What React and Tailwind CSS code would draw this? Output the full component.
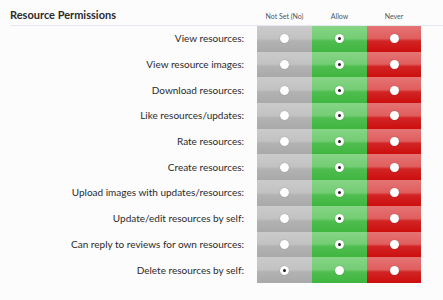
import React from "react";

const ROWS = [
  ["View resources:", 1],
  ["View resource images:", 1],
  ["Download resources:", 1],
  ["Like resources/updates:", 1],
  ["Rate resources:", 1],
  ["Create resources:", 1],
  ["Upload images with updates/resources:", 1],
  ["Update/edit resources by self:", 1],
  ["Can reply to reviews for own resources:", 1],
  ["Delete resources by self:", 0],
];

const CELLS = [
  "bg-[linear-gradient(to_bottom,#cbcbcb_0%,#c2c2c2_48%,#b2b2b2_58%,#a9a9a9_100%)]",
  "bg-[linear-gradient(to_bottom,#86d586_0%,#74cd74_48%,#4fbd4f_58%,#3fb63f_100%)]",
  "bg-[linear-gradient(to_bottom,#e57474_0%,#e05e5e_48%,#d22424_58%,#cc0e0e_100%)]",
];

function Radio({ checked }) {
  return (
    <span className="w-[9px] h-[9px] rounded-full bg-white shadow-[0_0_1px_rgba(0,0,0,0.35)] flex items-center justify-center">
      {checked ? <span className="w-[3px] h-[3px] rounded-full bg-[#222]" /> : null}
    </span>
  );
}

export default function App() {
  return (
    <div className="w-[443px] h-[300px] bg-[#fcfcfd] pl-[10px] font-['Lato','Liberation_Sans',sans-serif] text-[#2a2a2a]">
      <div className="grid grid-cols-[1fr_55px_55px_54px_22px] h-[26px] items-end pb-[3px] border-b border-[#e4e9ef]">
        <div className="text-[11px] font-bold text-[#2a2a2a] leading-[14px]">Resource Permissions</div>
        <div className="text-[7px] text-[#555] text-center leading-[12px]">Not Set (No)</div>
        <div className="text-[7px] text-[#555] text-center leading-[12px]">Allow</div>
        <div className="text-[7px] text-[#555] text-center leading-[12px]">Never</div>
        <div />
      </div>
      <div className="mr-[22px]">
        {ROWS.map(([label, v]) => (
          <div key={label} className="grid grid-cols-[1fr_55px_55px_54px] h-[25.7px]">
            <div className="text-[10px] text-right pr-[13px] flex items-center justify-end">{label}</div>
            {CELLS.map((c, i) => (
              <div key={i} className={`${c} flex items-center justify-center`}>
                <Radio checked={i === v} />
              </div>
            ))}
          </div>
        ))}
      </div>
    </div>
  );
}
